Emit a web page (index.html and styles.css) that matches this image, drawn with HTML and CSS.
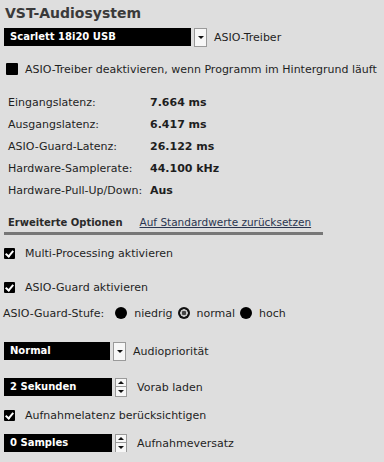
FILE: index.html
```html
<!DOCTYPE HTML>
<html>
<head>
  <title>VST-Audiosystem</title>
  <meta name="viewport" content="width=device-width, initial-scale=1">
  <link rel="stylesheet" href="styles.css">
</head>
<body>
  <div class="panel">
    <h1 class="title">VST-Audiosystem</h1>

    <div class="row driver-row">
      <div class="select wide">Scarlett 18i20 USB</div>
      <div class="arrow-btn"><span class="tri-down"></span></div>
      <span class="label after-select">ASIO-Treiber</span>
    </div>

    <div class="row check-row first-check">
      <span class="box"></span>
      <span class="label">ASIO-Treiber deaktivieren, wenn Programm im Hintergrund läuft</span>
    </div>

    <div class="info">
      <div class="info-row"><span class="info-key">Eingangslatenz:</span><span class="info-val">7.664 ms</span></div>
      <div class="info-row"><span class="info-key">Ausgangslatenz:</span><span class="info-val">6.417 ms</span></div>
      <div class="info-row"><span class="info-key">ASIO-Guard-Latenz:</span><span class="info-val">26.122 ms</span></div>
      <div class="info-row"><span class="info-key">Hardware-Samplerate:</span><span class="info-val">44.100 kHz</span></div>
      <div class="info-row"><span class="info-key">Hardware-Pull-Up/Down:</span><span class="info-val">Aus</span></div>
    </div>

    <div class="tabs">
      <span class="tab active">Erweiterte Optionen</span>
      <a class="tab reset" href="#">Auf Standardwerte zurücksetzen</a>
    </div>

    <div class="row check-row multi">
      <span class="box checked"></span>
      <span class="label">Multi-Processing aktivieren</span>
    </div>

    <div class="row check-row guard">
      <span class="box checked"></span>
      <span class="label">ASIO-Guard aktivieren</span>
    </div>

    <div class="row stufe">
      <span class="label">ASIO-Guard-Stufe:</span>
      <span class="radio"></span><span class="label">niedrig</span>
      <span class="radio selected"></span><span class="label">normal</span>
      <span class="radio"></span><span class="label">hoch</span>
    </div>

    <div class="row prio">
      <div class="select short">Normal</div>
      <div class="arrow-btn"><span class="tri-down"></span></div>
      <span class="label after-select">Audiopriorität</span>
    </div>

    <div class="row preload">
      <div class="select spin-field">2 Sekunden</div>
      <div class="spinner">
        <span class="spin-up"><span class="tri-up"></span></span>
        <span class="spin-down"><span class="tri-down"></span></span>
      </div>
      <span class="label after-spin">Vorab laden</span>
    </div>

    <div class="row check-row rec-lat">
      <span class="box checked"></span>
      <span class="label">Aufnahmelatenz berücksichtigen</span>
    </div>

    <div class="row offset">
      <div class="select spin-field">0 Samples</div>
      <div class="spinner">
        <span class="spin-up"><span class="tri-up"></span></span>
        <span class="spin-down"><span class="tri-down"></span></span>
      </div>
      <span class="label after-spin">Aufnahmeversatz</span>
    </div>
  </div>
</body>
</html>
```

FILE: styles.css
```css
html {
  font-family: "DejaVu Sans", Verdana, sans-serif;
  font-size: 11px;
}
body {
  margin: 0;
  background-color: #dedede;
  color: #1e1e1e;
}
.panel {
  padding: 0 4px;
}
.title {
  margin: 0;
  padding-left: 1px;
  height: 28px;
  line-height: 26px;
  font-size: 14px;
  font-weight: bold;
  color: #3a3a3a;
}
.row {
  display: flex;
  align-items: center;
  height: 18px;
}
.row > * {
  flex-shrink: 0;
}
.label {
  white-space: nowrap;
}

/* dropdowns and number fields */
.select {
  height: 18px;
  line-height: 18px;
  background-color: #000;
  color: #fff;
  font-weight: bold;
  font-size: 10px;
  padding-left: 6px;
  box-sizing: border-box;
}
.wide { width: 187px; }
.short { width: 106px; }
.spin-field { width: 108px; }
.arrow-btn {
  width: 11px;
  height: 17px;
  margin-left: 3px;
  background-color: #f7f7f7;
  border: 1px solid #9a9a9a;
  display: flex;
  align-items: center;
  justify-content: center;
}
.tri-down, .tri-up {
  width: 0;
  height: 0;
  border-left: 3px solid transparent;
  border-right: 3px solid transparent;
}
.tri-down { border-top: 3px solid #111; }
.tri-up { border-bottom: 3px solid #111; }
.spinner {
  display: flex;
  flex-direction: column;
  margin-left: 3px;
  height: 19px;
}
.spin-up, .spin-down {
  width: 10px;
  height: 8px;
  background-color: #f7f7f7;
  border: 1px solid #9a9a9a;
  display: flex;
  align-items: center;
  justify-content: center;
}
.spin-down { border-top: none; height: 9px; }
.after-select { margin-left: 7px; }
.after-spin { margin-left: 10px; }

/* checkboxes */
.check-row .box {
  width: 11px;
  height: 11px;
  background-color: #000;
  border-radius: 1px;
  margin-right: 10px;
  position: relative;
}
.first-check .box {
  width: 12px;
  height: 12px;
  margin-left: 2px;
  margin-right: 7px;
}
.box.checked::after {
  content: "";
  position: absolute;
  left: 3px;
  top: 1px;
  width: 3px;
  height: 6px;
  border: solid #fff;
  border-width: 0 2px 2px 0;
  transform: rotate(40deg);
}
.first-check { margin-top: 14px; }
.multi { margin-top: 9px; }
.guard { margin-top: 16px; }
.rec-lat { margin-top: 10px; }

/* info table */
.info {
  margin-top: 13px;
  padding-left: 4px;
}
.info-row {
  display: flex;
  align-items: center;
  height: 22px;
}
.info-key {
  width: 142px;
}
.info-val {
  font-weight: bold;
}

/* tabs */
.tabs {
  margin-top: 11px;
  margin-right: 57px;
  height: 20px;
  display: flex;
  align-items: center;
  padding-left: 4px;
  border-bottom: 3px solid #777;
  white-space: nowrap;
}
.tab.active {
  font-weight: bold;
  font-size: 10px;
  color: #2a2a2a;
}
.tab.reset {
  margin-left: 17px;
  font-size: 10.5px;
  color: #2a3550;
  text-decoration: underline;
}

/* radios */
.stufe {
  margin-top: 8px;
  margin-left: -1px;
}
.stufe > .label:first-child { margin-right: 11px; }
.radio {
  width: 12px;
  height: 12px;
  border-radius: 50%;
  background-color: #000;
  margin-right: 7px;
}
.radio + .label { margin-right: 5px; }
.radio.selected {
  background: radial-gradient(circle, #444 0 2px, #c8c8c8 2.5px 3.5px, #111 4px);
}

.driver-row { margin-top: 0; }
.prio { margin-top: 20px; }
.preload { margin-top: 18px; }
.offset { margin-top: 10px; }
```
